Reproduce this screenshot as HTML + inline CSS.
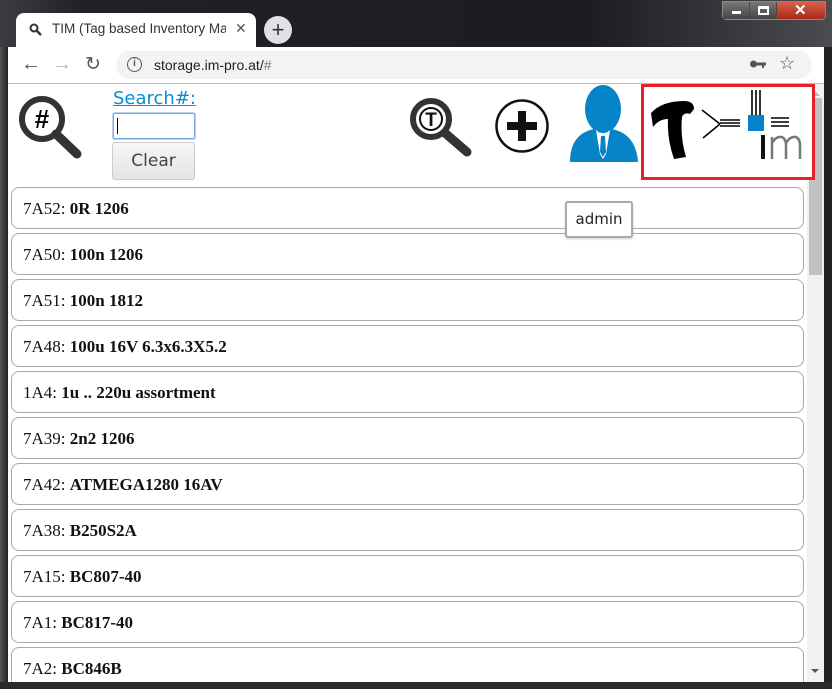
<!DOCTYPE html>
<html><head><style>
*{margin:0;padding:0;box-sizing:border-box}
body{width:832px;height:689px;overflow:hidden;background:#1e2024;position:relative;font-family:"Liberation Sans",sans-serif}
.abs{position:absolute}
.item{position:absolute;left:11px;width:793px;height:42px;border:1px solid #aaa;border-radius:8px;background:#fff;font-family:"Liberation Serif",serif;font-size:17px;color:#111;padding:11px 0 0 11px}
.item b{font-weight:bold}
</style></head><body>
<div class="abs" style="left:0;top:0;width:832px;height:47px;background:linear-gradient(90deg,#3a3c40 0,#202226 10%,#1a1c20 70%,#4a4c50 100%)"></div>
<div class="abs" style="left:722px;top:1px;width:104px;height:19px;border:1px solid #888;border-radius:0 0 4px 4px;background:#4a4a4a"></div>
<div class="abs" style="left:723px;top:2px;width:26px;height:17px;background:linear-gradient(#777,#444)"></div>
<div class="abs" style="left:750px;top:2px;width:26px;height:17px;background:linear-gradient(#777,#444)"></div>
<div class="abs" style="left:777px;top:2px;width:48px;height:17px;background:linear-gradient(#d8604a,#a82a18);border-radius:0 0 4px 0"></div>
<div class="abs" style="left:732px;top:11px;width:9px;height:3px;background:#fff"></div>
<div class="abs" style="left:758px;top:6px;width:11px;height:9px;border:2px solid #fff;border-top-width:3px"></div>
<div class="abs" style="left:794px;top:1px;color:#fff;font-size:15px;font-weight:bold">✕</div>
<div class="abs" style="left:16px;top:13px;width:240px;height:35px;background:#fff;border-radius:8px 8px 0 0"></div>
<svg class="abs" style="left:29px;top:23px" width="14" height="14"><circle cx="5" cy="5" r="3.5" fill="none" stroke="#333" stroke-width="2"/><line x1="8" y1="8" x2="12" y2="12" stroke="#333" stroke-width="2.5"/></svg>
<div class="abs" style="left:52px;top:21px;font-size:13.5px;color:#333;width:174px;white-space:nowrap;overflow:hidden">TIM (Tag based Inventory Manag</div>
<div class="abs" style="left:235px;top:20px;font-size:14px;color:#555">✕</div>
<div class="abs" style="left:264px;top:16px;width:28px;height:28px;border-radius:50%;background:#dfe1e5;color:#333;font-size:22px;line-height:27px;text-align:center">+</div>
<div class="abs" style="left:8px;top:47px;width:816px;height:37px;background:#fff;border-bottom:1px solid #bbb"></div>
<div class="abs" style="left:21px;top:53px;font-size:20px;color:#555">←</div>
<div class="abs" style="left:52px;top:53px;font-size:20px;color:#bbb">→</div>
<div class="abs" style="left:85px;top:53px;font-size:19px;color:#555">↻</div>
<div class="abs" style="left:116px;top:51px;width:696px;height:28px;border-radius:14px;background:#f1f3f4"></div>
<div class="abs" style="left:127px;top:57px;width:15px;height:15px;border:1.6px solid #555;border-radius:50%;font-size:10px;line-height:12px;text-align:center;color:#555;font-weight:bold">i</div>
<div class="abs" style="left:154px;top:57px;font-size:14px;color:#222">storage.im-pro.at/<span style="color:#777">#</span></div>
<svg class="abs" style="left:749px;top:58px" width="18" height="12"><circle cx="4.5" cy="6" r="3.5" fill="#555"/><rect x="7" y="4.5" width="10" height="3" fill="#555"/><rect x="13" y="6" width="2" height="4" fill="#555"/></svg>
<div class="abs" style="left:779px;top:53px;font-size:18px;color:#555">☆</div>
<div class="abs" style="left:8px;top:84px;width:799px;height:598px;background:#fff"></div>
<div class="abs" style="left:807px;top:84px;width:17px;height:598px;background:#f1f1f1"></div>
<div class="abs" style="left:809px;top:98px;width:13px;height:177px;background:#c1c1c1"></div>
<div class="abs" style="left:812px;top:88px;width:0;height:0;border:4px solid transparent;border-bottom-color:#bbb"></div>
<div class="abs" style="left:811px;top:669px;width:0;height:0;border:4px solid transparent;border-top-color:#555"></div>
<svg class="abs" style="left:17px;top:94px" width="68" height="66"><circle cx="25" cy="25" r="20" fill="#fff" stroke="#333" stroke-width="6"/><line x1="39" y1="40" x2="60" y2="60" stroke="#333" stroke-width="9" stroke-linecap="round"/><text x="25" y="34" font-family="Liberation Sans" font-weight="bold" font-size="26" text-anchor="middle" fill="#000">#</text></svg>
<a class="abs" style="left:113px;top:88px;font-size:18px;color:#0a8bd6;text-decoration:underline;font-family:'DejaVu Sans',sans-serif">Search#:</a>
<div class="abs" style="left:113px;top:113px;width:82px;height:26px;border:1px solid #7da8e8;border-radius:2px;box-shadow:0 0 0 1px #b6cff5"></div>
<div class="abs" style="left:117px;top:118px;width:1px;height:16px;background:#000"></div>
<div class="abs" style="left:112px;top:142px;width:83px;height:38px;border:1px solid #ccc;border-radius:3px;background:linear-gradient(#f6f6f6,#e4e4e4);font-family:'DejaVu Sans',sans-serif;font-size:17px;color:#444;text-align:center;line-height:36px">Clear</div>
<svg class="abs" style="left:409px;top:94px" width="68" height="66"><circle cx="22" cy="25" r="18" fill="#fff" stroke="#333" stroke-width="6"/><line x1="36" y1="39" x2="58" y2="58" stroke="#333" stroke-width="9" stroke-linecap="round"/><circle cx="22" cy="25" r="11" fill="none" stroke="#111" stroke-width="2"/><text x="22" y="32" font-family="Liberation Sans" font-weight="bold" font-size="19" text-anchor="middle" fill="#111">T</text></svg>
<svg class="abs" style="left:494px;top:98px" width="56" height="56"><circle cx="28" cy="28" r="25.5" fill="#fff" stroke="#111" stroke-width="2.5"/><rect x="24" y="13" width="8" height="30" fill="#111"/><rect x="13" y="24" width="30" height="8" fill="#111"/></svg>
<svg class="abs" style="left:568px;top:84px" width="72" height="80"><ellipse cx="35" cy="25" rx="18" ry="24" fill="#0784c8"/><path d="M2 78 Q2 50 26 45 L35 52 L44 45 Q68 50 70 78 Z" fill="#0784c8"/><path d="M28 46 L35 52 L42 46 L38 70 L35 75 L32 70 Z" fill="#fff"/><path d="M33 52 L37 52 L38 68 L35 73 L32 68 Z" fill="#0784c8"/></svg>
<div class="abs" style="left:641px;top:84px;width:174px;height:96px;border:3px solid #e8202a;background:#fff"></div>
<svg class="abs" style="left:644px;top:87px" width="168" height="90"><path d="M7 26 Q18 14 40 14 Q50 14 50 22 L46 27 Q40 25 38 30 Q36 50 42 70 L30 72 Q23 52 24 32 Q15 32 9 40 Z" fill="#000"/><path d="M58 23 L76 37 M59 51 L76 37 M76 33 L96 33 M76 36 L96 36 M76 39 L96 39" stroke="#000" stroke-width="1.6" fill="none"/><path d="M108 3 V28 M112 3 V28 M116 3 V28" stroke="#000" stroke-width="1.6"/><rect x="104" y="28" width="16" height="16" fill="#0784c8"/><path d="M127 31 H145 M127 35 H145 M127 39 H145" stroke="#000" stroke-width="1.6"/><rect x="117" y="48" width="4" height="24" fill="#111"/><path d="M128 72 V50 M128 56 Q132 49 138 50 Q142 52 142 58 V72 M142 56 Q146 49 152 50 Q156 52 156 58 V72" stroke="#777" stroke-width="2.5" fill="none"/></svg>
<div class="item" style="top:187px">7A52: <b>0R 1206</b></div>
<div class="item" style="top:233px">7A50: <b>100n 1206</b></div>
<div class="item" style="top:279px">7A51: <b>100n 1812</b></div>
<div class="item" style="top:325px">7A48: <b>100u 16V 6.3x6.3X5.2</b></div>
<div class="item" style="top:371px">1A4: <b>1u .. 220u assortment</b></div>
<div class="item" style="top:417px">7A39: <b>2n2 1206</b></div>
<div class="item" style="top:463px">7A42: <b>ATMEGA1280 16AV</b></div>
<div class="item" style="top:509px">7A38: <b>B250S2A</b></div>
<div class="item" style="top:555px">7A15: <b>BC807-40</b></div>
<div class="item" style="top:601px">7A1: <b>BC817-40</b></div>
<div class="item" style="top:647px">7A2: <b>BC846B</b></div>
<div class="abs" style="left:565px;top:201px;width:68px;height:37px;border:2px solid #aaa;border-radius:3px;background:#fff;box-shadow:0 1px 2px rgba(0,0,0,.2);font-family:'DejaVu Sans',sans-serif;font-size:15px;color:#222;text-align:center;line-height:33px">admin</div>
<div class="abs" style="left:0;top:47px;width:8px;height:642px;background:linear-gradient(90deg,#555,#222)"></div>
<div class="abs" style="left:824px;top:47px;width:8px;height:642px;background:#222"></div>
<div class="abs" style="left:0;top:682px;width:832px;height:7px;background:#2a2a2a"></div>
</body></html>
